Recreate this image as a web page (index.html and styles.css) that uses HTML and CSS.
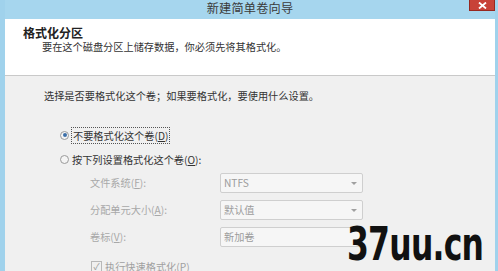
FILE: index.html
```html
<!DOCTYPE html>
<html lang="zh-CN">
<head>
    <meta charset="UTF-8">
    <title>新建简单卷向导</title>
    <link rel="stylesheet" href="styles.css">
</head>
<body>
    <!-- Wizard window frame -->
    <div class="window">
        <!-- Title bar -->
        <div class="titlebar">
            <div class="title">新建简单卷向导</div>
        </div>

        <!-- Close control sits over the frame corner -->
        <div class="close-btn">
            <svg width="9" height="7" viewBox="0 0 9 7"><path d="M1 0.5 L8 6.5 M8 0.5 L1 6.5" stroke="#ffffff" stroke-width="1.8"/></svg>
        </div>

        <div class="client">
            <!-- White header -->
            <div class="header">
                <div class="header-title">格式化分区</div>
                <div class="header-sub">要在这个磁盘分区上储存数据，你必须先将其格式化。</div>
            </div>

            <!-- Page body -->
            <div class="page">
                <p class="intro">选择是否要格式化这个卷；如果要格式化，要使用什么设置。</p>

                <div class="options">
                    <label class="radio-row">
                        <span class="radio checked"></span>
                        <span class="focus">不要格式化这个卷(<u>D</u>)</span>
                    </label>
                    <label class="radio-row">
                        <span class="radio"></span>
                        <span>按下列设置格式化这个卷(<u>O</u>):</span>
                    </label>
                </div>

                <!-- Disabled format settings -->
                <div class="settings">
                    <div class="label">文件系统(<u>F</u>):</div>
                    <div class="combo">NTFS<span class="arrow"></span></div>
                    <div class="label">分配单元大小(<u>A</u>):</div>
                    <div class="combo">默认值<span class="arrow"></span></div>
                    <div class="label">卷标(<u>V</u>):</div>
                    <div class="textbox">新加卷</div>
                </div>

                <label class="check-row">
                    <span class="checkbox">✓</span>
                    <span>执行快速格式化(P)</span>
                </label>
            </div>
        </div>

        <!-- Watermark over the picture -->
        <div class="watermark">37uu.cn</div>
    </div>
</body>
</html>
```

FILE: styles.css
```css
/* Page basics */
body {
    margin: 0;
    width: 498px;
    height: 271px;
    overflow: hidden;
    font-family: "Noto Sans CJK SC", "Noto Sans", sans-serif;
    background-color: rgb(160, 210, 236);
}

/* Window frame */
.window {
    position: relative;
    height: 271px;
    background-color: rgb(160, 210, 236);
    padding: 0 3px 0 5px;
    display: flex;
    flex-direction: column;
    overflow: hidden;
}

/* Title bar */
.titlebar {
    height: 19px;
    flex-shrink: 0;
    background-color: rgb(166, 214, 238);
    display: flex;
    justify-content: center;
}

.title {
    font-size: 12.2px;
    line-height: 17px;
    color: #3a3a3a;
    letter-spacing: 0.2px;
}

.close-btn {
    position: absolute;
    top: 0;
    right: 3px;
    width: 26px;
    height: 11px;
    background-color: rgb(200, 66, 56);
    border: 1px solid rgb(150, 40, 32);
    border-top: none;
    box-sizing: border-box;
    display: flex;
    justify-content: center;
    align-items: center;
}

/* Client area */
.client {
    flex: 1;
    min-height: 0;
    display: flex;
    flex-direction: column;
    background: #f0f0f0;
}

.header {
    height: 57px;
    flex-shrink: 0;
    background: #fff;
    border-bottom: 1px solid #c9c9c9;
    padding: 7px 0 0 18px;
    box-sizing: border-box;
    color: #222;
}

.header-title {
    font-size: 12px;
    font-weight: bold;
    line-height: 14px;
}

.header-sub {
    font-size: 10.2px;
    line-height: 12px;
    margin: 1px 0 0 19px;
    color: #333;
}

/* Body */
.page {
    padding: 13px 0 0 39px;
    font-size: 10.2px;
    color: #333;
}

.intro {
    margin: 0;
    line-height: 14px;
}

.options {
    margin: 25px 0 0 16px;
    display: flex;
    flex-direction: column;
    gap: 10px;
}

.radio-row {
    display: flex;
    align-items: center;
    gap: 3px;
    height: 14px;
}

.radio {
    width: 7px;
    height: 7px;
    border-radius: 50%;
    border: 1px solid #9a9a9a;
    background: #f4f4f4;
    position: relative;
}

.radio.checked::after {
    content: "";
    position: absolute;
    left: 1.5px;
    top: 1.5px;
    width: 4px;
    height: 4px;
    border-radius: 50%;
    background: #3d6fa8;
}

.focus {
    outline: 1px dotted #555;
    padding: 0 1px;
}

/* Format settings grid */
.settings {
    margin: 7px 0 0 46px;
    display: grid;
    grid-template-columns: 130px 143px;
    row-gap: 7px;
    align-items: center;
    color: #a8a8a8;
}

.label {
    line-height: 20px;
}

.combo,
.textbox {
    height: 20px;
    box-sizing: border-box;
    border: 1px solid #cfcfcf;
    border-radius: 2px;
    background: #f6f6f6;
    padding-left: 3px;
    line-height: 18px;
    color: #9c9c9c;
    display: flex;
    justify-content: space-between;
    align-items: center;
}

.arrow {
    width: 0;
    height: 0;
    border-left: 3px solid transparent;
    border-right: 3px solid transparent;
    border-top: 3px solid #a0a0a0;
    margin-right: 5px;
}

/* Quick format checkbox */
.check-row {
    margin: 12px 0 0 47px;
    display: flex;
    align-items: center;
    gap: 3px;
    color: #a0a0a0;
}

.checkbox {
    width: 9px;
    height: 9px;
    border: 1px solid #b8b8b8;
    font-size: 9px;
    line-height: 9px;
    text-align: center;
    color: #9a9a9a;
}

/* Watermark */
.watermark {
    position: absolute;
    left: 347px;
    top: 219px;
    font-family: "DejaVu Sans Condensed", "DejaVu Sans", sans-serif;
    font-weight: bold;
    font-size: 46px;
    line-height: 50px;
    color: #111;
    letter-spacing: -1px;
    transform: scaleX(0.76);
    transform-origin: left top;
}
```
